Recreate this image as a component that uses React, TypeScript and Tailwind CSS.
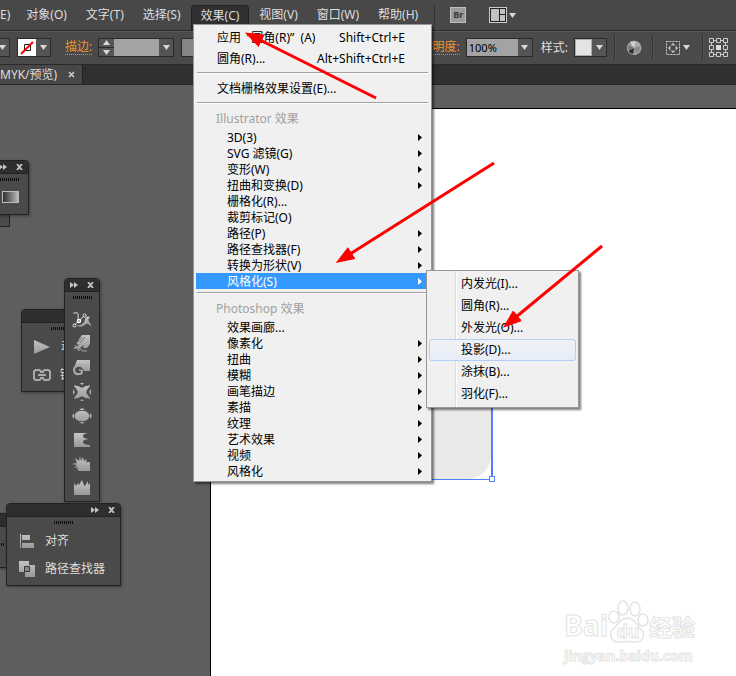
import type { ReactNode } from 'react'

type Item = { label: string; sub?: boolean; active?: boolean }

const MENUS = ['对象(O)', '文字(T)', '选择(S)', '效果(C)', '视图(V)', '窗口(W)', '帮助(H)']

const ILLUSTRATOR: Item[] = [
  { label: '3D(3)', sub: true },
  { label: 'SVG 滤镜(G)', sub: true },
  { label: '变形(W)', sub: true },
  { label: '扭曲和变换(D)', sub: true },
  { label: '栅格化(R)...' },
  { label: '裁剪标记(O)' },
  { label: '路径(P)', sub: true },
  { label: '路径查找器(F)', sub: true },
  { label: '转换为形状(V)', sub: true },
  { label: '风格化(S)', sub: true, active: true },
]

const PHOTOSHOP: Item[] = [
  { label: '效果画廊...' },
  { label: '像素化', sub: true },
  { label: '扭曲', sub: true },
  { label: '模糊', sub: true },
  { label: '画笔描边', sub: true },
  { label: '素描', sub: true },
  { label: '纹理', sub: true },
  { label: '艺术效果', sub: true },
  { label: '视频', sub: true },
  { label: '风格化', sub: true },
]

const STYLIZE = ['内发光(I)...', '圆角(R)...', '外发光(O)...', '投影(D)...', '涂抹(B)...', '羽化(F)...']

function Triangle() {
  return (
    <svg width="7" height="5" viewBox="0 0 7 5" aria-hidden="true">
      <path d="M0 0h7L3.5 5z" fill="#d8d8d8" />
    </svg>
  )
}

function DropButton({ label }: { label: string }) {
  return (
    <button aria-label={label} className="flex h-[17px] w-[14px] shrink-0 items-center justify-center bg-[#555]">
      <Triangle />
    </button>
  )
}

function Divider() {
  return <span className="h-[25px] w-[2px] shrink-0 border-l border-[#333] bg-[#545454]" />
}

function MenuBar() {
  return (
    <header className="flex h-[30px] shrink-0 items-center gap-px bg-[#484848]">
      <button className="h-full pr-[6px]">E)</button>
      {MENUS.map(m => (
        <button
          key={m}
          className={`h-full shrink-0 px-[9px] ${m === '效果(C)' ? 'mt-[10px] rounded-t-sm border border-b-0 border-[#222] bg-[#303030] pb-[10px]' : ''}`}
        >
          {m}
        </button>
      ))}
      <span className="ml-[6px] mr-[14px] h-5 w-px bg-[#333]" />
      <button aria-label="Bridge" className="flex h-4 w-4 items-center justify-center border border-[#c0c0c0] bg-[#9b9b9b] text-[9px] font-bold text-[#333]">Br</button>
      <button aria-label="排列文档" className="ml-[22px] flex items-center gap-[2px]">
        <svg width="18" height="16" viewBox="0 0 18 16">
          <path d="M0 0h18v16H0z" fill="#ccc" />
          <path d="M1 1h16v14H1z" fill="#222" />
          <path d="M2 2h8v12H2zM11 2h5v5h-5zM11 8h5v6h-5z" fill="#c2c2c2" />
        </svg>
        <Triangle />
      </button>
    </header>
  )
}

function OptionsBar() {
  return (
    <div className="flex h-[35px] shrink-0 items-center border-y border-[#2a2a2a] bg-[#4a4a4a] shadow-[inset_0_1px_0_#5a5a5a]">
      <div className="-ml-[6px] mr-[7px] border border-[#2a2a2a]"><DropButton label="填色" /></div>
      <div className="flex shrink-0 items-center border border-[#2a2a2a]">
        <svg width="18" height="17" viewBox="0 0 18 17">
          <path d="M0 0h18v17H0z" fill="#fff" />
          <path d="M6.5 5.5h6v6h-6z" fill="none" stroke="#222" />
          <path d="M3 15L15 3" stroke="#f00" strokeWidth="2" />
        </svg>
        <DropButton label="描边颜色" />
      </div>
      <button className="ml-[14px] shrink-0 border-b border-dotted border-[#e08a2c] leading-[14px] text-[#f0912d]">描边:</button>
      <div className="ml-[6px] flex shrink-0 items-center border border-[#2a2a2a]">
        <div className="flex w-[15px] flex-col gap-px bg-[#2a2a2a]">
          <button aria-label="增加" className="flex h-2 rotate-180 items-center justify-center bg-[#555]"><Triangle /></button>
          <button aria-label="减少" className="flex h-2 items-center justify-center bg-[#555]"><Triangle /></button>
        </div>
        <input aria-label="描边粗细" className="h-[17px] w-[45px] bg-[#a3a3a3]" />
        <DropButton label="描边粗细列表" />
      </div>
      <input aria-label="变量宽度" className="ml-[7px] h-[19px] w-[120px] shrink-0 border border-[#2a2a2a] bg-[#858585]" />
      <label htmlFor="opacity" className="ml-auto shrink-0 border-b border-dotted border-[#e08a2c] leading-[14px] text-[#f0912d]">不透明度:</label>
      <div className="ml-[6px] flex shrink-0 items-center border border-[#2a2a2a]">
        <input id="opacity" defaultValue="100%" className="h-[17px] w-[51px] bg-[#a3a3a3] px-[2px] text-[11px] text-black" />
        <DropButton label="不透明度列表" />
      </div>
      <span className="ml-[8px] shrink-0">样式:</span>
      <div className="ml-[6px] flex shrink-0 items-center border border-[#2a2a2a] bg-[#555]">
        <button aria-label="图形样式" className="h-[17px] w-[17px] border border-[#aaa] bg-[#e3e3e3]" />
        <DropButton label="样式列表" />
      </div>
      <div className="ml-[7px] flex shrink-0 items-center">
        <Divider />
        <button aria-label="重新着色图稿" className="mx-[10px]">
          <svg width="16" height="16" viewBox="0 0 16 16">
            <circle cx="8" cy="8" r="7" fill="#999" />
            <path d="M8 8L4 2a7 7 0 0 1 6-1z" fill="#d5d5d5" />
            <path d="M8 8l2-7a7 7 0 0 1 5 5z" fill="#aaa" />
            <path d="M8 8l7-2a7 7 0 0 1-3 8z" fill="#8a8a8a" />
            <path d="M8 8l-1 7a7 7 0 0 1-5-4z" fill="#2c2c2c" />
            <path d="M8 8l-6 3a7 7 0 0 1 0-6z" fill="#777" />
            <circle cx="8" cy="8" r="6.5" fill="none" stroke="#aaa" />
          </svg>
        </button>
        <Divider />
        <button aria-label="对齐选项" className="ml-[12px] mr-[12px] flex items-center gap-[3px]">
          <svg width="14" height="14" viewBox="0 0 14 14" fill="none" stroke="#ccc">
            <path d="M.5.5h13v13H.5z" strokeDasharray="2 1" />
            <path d="M7 2l2 2H5zM7 12l2-2H5zM2 7l2-2v4zM12 7l-2-2v4z" fill="#ccc" stroke="none" />
            <path d="M4.500 4.500h5v5h-5z" strokeDasharray="1 1" stroke="#999" />
          </svg>
          <Triangle />
        </button>
        <Divider />
        <button aria-label="变换" className="ml-[5px] mr-2">
          <svg width="19" height="19" viewBox="0 0 19 19" fill="none" stroke="#ccc">
            <path d="M2.5 2.5h14v14h-14z" />
            <g fill="#4a4a4a">
              <path d="M.5.5h4v4h-4zM7.500.5h4v4h-4zM14.500.5h4v4h-4zM.5 7.500h4v4h-4zM14.500 7.500h4v4h-4zM.5 14.500h4v4h-4zM7.500 14.500h4v4h-4zM14.500 14.500h4v4h-4z" />
            </g>
            <path d="M7 7h5v5H7z" fill="#ddd" stroke="none" />
          </svg>
        </button>
      </div>
    </div>
  )
}

function PanelButtons() {
  return (
    <div className="flex items-center gap-[9px]">
      <button aria-label="折叠">
        <svg width="8" height="6" viewBox="0 0 8 6"><path d="M0 0l4 3-4 3zM4 0l4 3-4 3z" fill="#c4c4c4" /></svg>
      </button>
      <button aria-label="关闭">
        <svg width="7" height="6" viewBox="0 0 7 6"><path d="M1 0l5 6M6 0L1 6" stroke="#c4c4c4" strokeWidth="1.800" /></svg>
      </button>
    </div>
  )
}

function Grip() {
  return <div className="h-[3px] w-[19px] shrink-0 bg-[repeating-linear-gradient(90deg,#0c0c0c_0,#0c0c0c_1px,#4a4a4a_1px,#4a4a4a_2px)]" />
}

function Panel({ className, buttons = true, children }: { className: string; buttons?: boolean; children?: ReactNode }) {
  return (
    <section className={`absolute rounded-t border border-[#222] bg-[#4a4a4a] shadow-[1px_1px_3px_rgba(0,0,0,0.35)] ${className}`}>
      <div className="flex h-[13px] items-center justify-end rounded-t border-b border-[#222] bg-[#2e2e2e] pr-[5px]">
        {buttons && <PanelButtons />}
      </div>
      {children}
    </section>
  )
}

// liquify tools, drawn on a 20x18 grid
const TOOLS = [
  {
    name: '宽度工具',
    art: (
      <>
        <path d="M2 3c0-2 3-2 4 0 1 3-1 5 1 8" stroke="#a8a8a8" strokeWidth="1.500" />
        <path d="M5 14c5 1 8-3 8-6 1-3 4-3 5-1-2 0-2 2-1 4 1 1 2 2 2 5-1-2-3-4-5-3-3 3-7 4-9 1z" fill="url(#tool)" />
        <path d="M2 14.500L13 4" stroke="#eee" />
        <g fill="#444" stroke="#eee">
          <circle cx="2.500" cy="14.500" r="1.500" />
          <circle cx="12.500" cy="4.500" r="1.500" />
        </g>
        <circle cx="7" cy="10" r="1.500" fill="#444" stroke="#fff" strokeWidth="1.500" />
      </>
    ),
  },
  {
    name: '变形工具',
    art: (
      <>
        <path d="M10 0h8v9l-3 4h-4l1-3-4 3-6 1c-1-1 0-2 1-2l4-2-2-1c-1-1 0-2 1-2l1-3z" fill="url(#tool)" />
        <path d="M10 2L7 6M13 2L8 8" stroke="#777" />
        <path d="M3 10l4 6v-3l4 3h4" stroke="#a5a5a5" />
      </>
    ),
  },
  {
    name: '旋转扭曲工具',
    art: (
      <>
        <path d="M5 1h13v11h-6c-1-4-4-5-9-4 0-3 1-4 2-7z" fill="url(#tool)" />
        <path d="M12 10c-1-4-5-4-7-3-5 2-3 9 2 8 4 0 4-5 0-4" stroke="#a8a8a8" strokeWidth="2" />
        <path d="M9 11c-1-2-4-2-4 0" stroke="#444" />
      </>
    ),
  },
  {
    name: '缩拢工具',
    art: <path d="M2 2c2 1 4 1 5 1 1 2 5 2 6 0 1 0 3 0 5-1 0 2-2 3-3 5-1 1-1 3 0 4 1 2 3 3 3 5-2-1-4-1-5-1-1-2-5-2-6 0-1 0-3 0-5 1 0-2 2-3 3-5 1-1 1-3 0-4-1-2-3-3-3-5zM8 0h4l-2 2zM8 18h4l-2-2zM1 6l2 3-2 3zM19 6l-2 3 2 3z" fill="url(#tool)" />,
  },
  {
    name: '膨胀工具',
    art: <path d="M4 6c2-3 10-3 12 0 2 2 2 4 0 6-2 3-10 3-12 0-2-2-2-4 0-6zM7 3l3-2 3 2zM7 15l3 2 3-2zM2 6v6L0 9zM18 6v6l2-3z" fill="url(#tool)" />,
  },
  { name: '扇贝工具', art: <path d="M2 2h16c-4 0-7 1-7 3s3 3 7 3c-4 0-7 1-7 3s3 3 7 3v2H2z" fill="url(#tool)" /> },
  { name: '晶格化工具', art: <path d="M18 16V7h-4l1-3-3 2-1-4-2 4-1-5-1 5-4-3 2 5-5 1 5 1-3 3 4-1-1 2 2 2z" fill="url(#tool)" /> },
  { name: '皱褶工具', art: <path d="M2 16V4l2 3 2-3 1 2 3-5 2 5 1 1 3-5v4l2-2v12z" fill="url(#tool)" /> },
]

function MenuRow({ label, sub, active }: Item) {
  return (
    <button
      className={`ml-[2px] flex h-4 items-center justify-between pl-[31px] pr-[9px] leading-4 ${active ? 'bg-[#3399ff] text-white' : ''}`}
    >
      <span className="pt-[2px]">{label}</span>
      {sub && <svg width="4" height="7" viewBox="0 0 4 7"><path d="M0 0l4 3.500L0 7z" fill="currentColor" /></svg>}
    </button>
  )
}

function Separator() {
  return <div role="separator" className="mx-[3px] mb-[4px] mt-[3px] h-[2px] border-t border-[#a0a0a0] bg-white" />
}

function EffectMenu() {
  return (
    <div className="absolute left-[193px] top-6 flex w-[239px] flex-col border border-[#979797] bg-[#f0f0f0] py-[2px] text-black shadow-[2px_2px_2px_rgba(0,0,0,0.5)]">
      <button className="flex h-[21px] items-center justify-between pl-[23px] pr-[26px]">
        <span className="flex gap-[6px]"><span>应用</span><span>“圆角(R)”&nbsp; (A)</span></span>
        <span>Shift+Ctrl+E</span>
      </button>
      <button className="flex h-[21px] items-center justify-between pl-[23px] pr-[26px]">
        <span>圆角(R)...</span>
        <span>Alt+Shift+Ctrl+E</span>
      </button>
      <Separator />
      <button className="flex h-[21px] items-center pl-[23px]">文档栅格效果设置(E)...</button>
      <Separator />
      <div className="flex h-[21px] items-center pl-[22px] text-[#a0a0a0]">Illustrator 效果</div>
      {ILLUSTRATOR.map(i => <MenuRow key={i.label} {...i} />)}
      <Separator />
      <div className="flex h-[21px] items-center pl-[22px] text-[#a0a0a0]">Photoshop 效果</div>
      {PHOTOSHOP.map(i => <MenuRow key={i.label} {...i} />)}
    </div>
  )
}

function StylizeMenu() {
  return (
    <div className="absolute left-[426px] top-[270px] flex w-[153px] flex-col border border-[#979797] bg-[#f0f0f0] bg-[linear-gradient(90deg,transparent_28px,#dcdcdc_28px,#dcdcdc_29px,#fff_29px,#fff_30px,transparent_30px)] p-[2px] text-black shadow-[2px_2px_2px_rgba(0,0,0,0.5)]">
      {STYLIZE.map(s => (
        <button
          key={s}
          className={`h-[22px] rounded-[3px] border pl-[31px] text-left leading-[20px] ${s === '投影(D)...' ? 'border-[#aecff7] bg-linear-to-b from-[#f0f1f4] to-[#e7edf7]' : 'border-transparent'}`}
        >
          {s}
        </button>
      ))}
    </div>
  )
}

function Arrows() {
  return (
    <svg className="pointer-events-none absolute left-0 top-0" width="736" height="676" viewBox="0 0 736 676" aria-hidden="true">
      <defs>
        <marker id="head" markerUnits="userSpaceOnUse" markerWidth="20" markerHeight="14" refX="2" refY="7" orient="auto">
          <path d="M0 0l19 7-19 7z" fill="#f00" />
        </marker>
      </defs>
      <g stroke="#f00" strokeWidth="3">
        <path d="M376 98L260 40" markerEnd="url(#head)" />
        <path d="M494 163L350 254" markerEnd="url(#head)" />
        <path d="M602 246L516 317" markerEnd="url(#head)" />
      </g>
    </svg>
  )
}

function Watermark() {
  return (
    <div className="absolute bottom-3 right-10 w-[132px] font-['Open_Sans','Noto_Sans_CJK_SC',sans-serif] font-bold text-white [-webkit-text-stroke:1px_#e4e4e4]">
      <div className="flex h-[44px] items-end">
        <span className="w-[43px] pb-1 text-[28px] leading-[30px]">Bai</span>
        <span className="relative flex h-[44px] w-[42px] shrink-0 items-end justify-center pb-[2px] text-[18px] leading-[22px]">
          <svg className="absolute left-0 top-0" width="42" height="44" viewBox="0 0 42 44" fill="#fff" stroke="#e4e4e4" strokeWidth="1.500">
            <ellipse cx="7" cy="17" rx="5" ry="6" />
            <ellipse cx="16" cy="8" rx="5" ry="7" />
            <ellipse cx="28" cy="9" rx="5" ry="7" />
            <ellipse cx="36" cy="20" rx="5" ry="6" />
            <path d="M21 18c6 0 8 6 12 10 6 5 4 14-4 14-4 0-12-1-16 0-9 1-12-8-6-14 5-5 7-10 14-10z" />
          </svg>
          <span className="relative">du</span>
        </span>
        <span className="shrink-0 pb-1 text-[23px] leading-[26px]">经验</span>
      </div>
      <div className="pt-1 text-[14px] leading-4">jingyan.baidu.com</div>
    </div>
  )
}

export default function App() {
  return (
    <div className="relative flex h-screen flex-col overflow-hidden bg-[#5e5e5e] font-['Noto_Sans','Noto_Sans_CJK_SC',sans-serif] text-[12px] leading-4 text-[#dedede]">
      <svg width="0" height="0" className="absolute" aria-hidden="true">
        <linearGradient id="tool" x1="0" y1="0" x2="0" y2="1">
          <stop stopColor="#c4c4c4" />
          <stop offset="1" stopColor="#999" />
        </linearGradient>
      </svg>
      <MenuBar />
      <OptionsBar />
      <div className="flex h-5 shrink-0 border-b border-[#252525] bg-[#303030]">
        <div className="flex w-[83px] items-center justify-between border-r border-[#222] bg-[#484848] pr-[7px]">
          <span>MYK/预览)</span>
          <button aria-label="关闭文档">
            <svg width="7" height="7" viewBox="0 0 7 7"><path d="M1 1l5 5M6 1L1 6" stroke="#d0d0d0" strokeWidth="1.500" /></svg>
          </button>
        </div>
      </div>
      <main className="flex flex-1 pt-[23px]">
        <div className="w-[210px] shrink-0" />
        <div className="relative flex-1 border-l border-t border-black bg-white">
          <div className="h-[371px] w-[282px] border-b border-r-2 border-[#4f80ff]">
            <div className="h-full w-full rounded-br-[24px] bg-[#ebe9e8]" />
          </div>
          <span className="absolute left-[278px] top-[367px] h-[6px] w-[6px] border border-[#4f80ff] bg-white" />
          <div className="absolute left-0 top-0 h-[200px] w-full bg-white" />
          <Watermark />
        </div>
      </main>

      {/* floating panels */}
      <div className="absolute -left-1 top-[213px] h-[14px] w-[14px] border border-[#222] bg-[#4a4a4a]" />
      <Panel className="-left-4 top-[160px] h-[55px] w-[45px]">
        <div className="flex flex-col items-end gap-[10px] pr-[9px] pt-1">
          <Grip />
          <button aria-label="渐变" className="h-3 w-[17px] border border-[#bbb] bg-linear-to-r from-[#333] to-[#bbb]" />
        </div>
      </Panel>
      <Panel className="left-[21px] top-[309px] h-[83px] w-[78px]" buttons={false}>
        <div className="flex flex-col pl-3 pt-1">
          <div className="ml-[17px]"><Grip /></div>
          <button className="mt-[3px] flex h-7 items-center gap-[11px] whitespace-nowrap">
            <svg width="16" height="14" viewBox="0 0 16 14"><path d="M0 0l16 7-16 7z" fill="url(#tool)" /></svg>
            动作
          </button>
          <button className="-ml-px flex h-7 items-center gap-[9px] whitespace-nowrap">
            <svg width="18" height="12" viewBox="0 0 18 12" fill="none" stroke="#a8a8a8" strokeWidth="2">
              <path d="M8 4V2.500L6.500 1h-4L1 2.500v7L2.500 11h4L8 9.500V8M10 4V2.500L11.500 1h4L17 2.500v7L15.500 11h-4L10 9.500V8M5 6h8" />
            </svg>
            链接
          </button>
        </div>
      </Panel>
      <Panel className="left-[64px] top-[278px] w-[36px]">
        <div className="flex flex-col items-center pb-px pt-1">
          <Grip />
          <div className="mt-[9px] flex flex-col">
            {TOOLS.map(t => (
              <button key={t.name} aria-label={t.name} className="flex h-6 items-center">
                <svg width="20" height="18" viewBox="0 0 20 18" fill="none">{t.art}</svg>
              </button>
            ))}
          </div>
        </div>
      </Panel>
      <Panel className="-left-4 top-[513px] h-[55px] w-[24px]" buttons={false}>
        <div className="pt-4"><Grip /></div>
      </Panel>
      <Panel className="left-[6px] top-[503px] w-[115px]">
        <div className="flex flex-col px-3 pb-[2px] pt-1">
          <div className="self-center"><Grip /></div>
          <button className="mt-[3px] flex h-7 items-center gap-[10px]">
            <svg width="16" height="16" viewBox="0 0 16 16">
              <path d="M1 1h1v14H1zM3 2h8v5H3zM3 10h12v5H3z" fill="url(#tool)" />
            </svg>
            对齐
          </button>
          <button className="flex h-7 items-center gap-[10px] whitespace-nowrap">
            <svg width="16" height="16" viewBox="0 0 16 16">
              <path d="M0 0h10v4h6v12H6v-5H0z" fill="url(#tool)" />
              <path d="M5.500 5.500h5v5h-5z" fill="#888" stroke="#333" />
            </svg>
            路径查找器
          </button>
        </div>
      </Panel>

      <EffectMenu />
      <StylizeMenu />
      <Arrows />
    </div>
  )
}
